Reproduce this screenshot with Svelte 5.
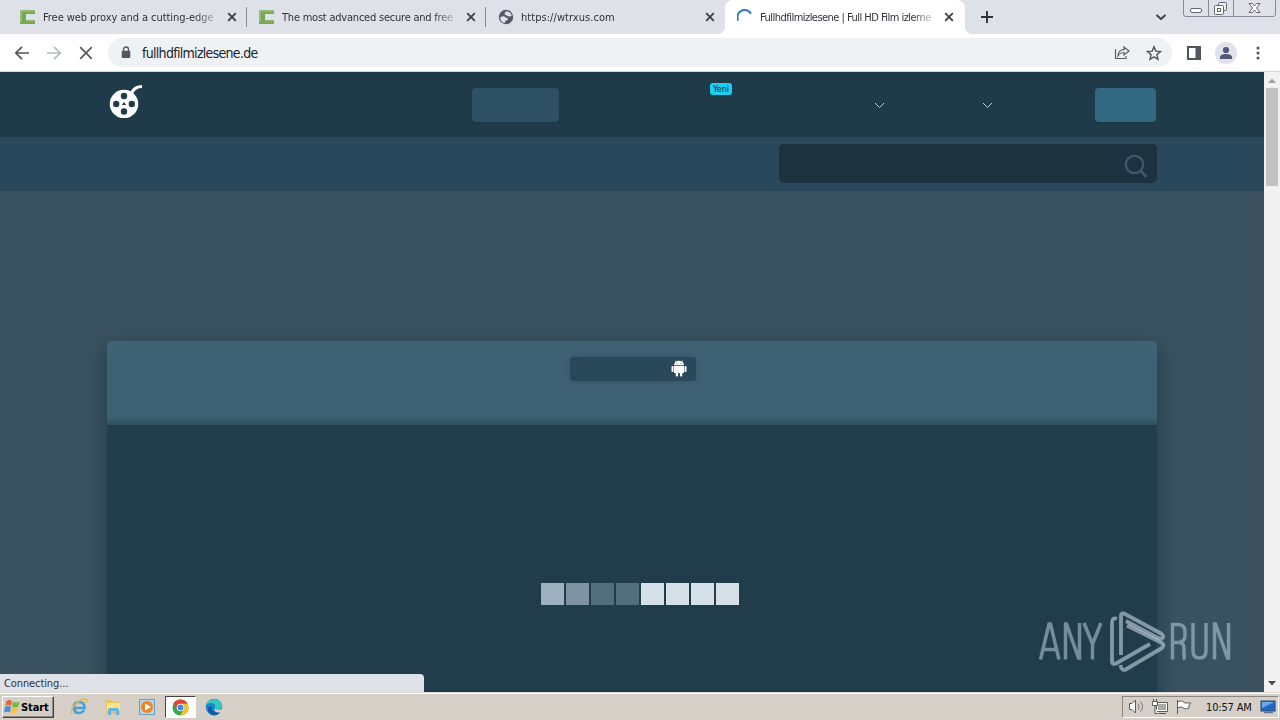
<script>
  const tabs = [
    { title: 'Free web proxy and a cutting-edge', icon: 'crox', gap: '-0.06px' },
    { title: 'The most advanced secure and free', icon: 'crox', gap: '-0.22px' },
    { title: 'https://wtrxus.com', icon: 'globe', gap: '0.05px' },
    { title: 'Fullhdfilmizlesene | Full HD Film izleme', icon: 'spin', active: true, gap: '-0.53px' }
  ];
  const blocks = ['#9db1bf', '#7f93a3', '#526f7e', '#526f7e', '#d5e0e8', '#d5e0e8', '#d5e0e8', '#d5e0e8'];
</script>

<div class="screen">
  <div class="tabstrip">
    {#each tabs as tab, i}
      <div class="tab" class:active={tab.active} class:divided={i < 2}>
        <svg class="favicon" viewBox="0 0 16 16" width="16" height="16">
          {#if tab.icon === 'crox'}
            <path d="M15 1H0v14h15v-4H6V5h9z" fill="#72aa4e" />
            <path d="M15 1H0l2 2h13zM6 11h9v1.500H5z" fill="#8fb879" />
            <path d="M0 1h2v12H0z" fill="#9ab98a" />
          {:else if tab.icon === 'globe'}
            <circle cx="8" cy="8" r="7.2" fill="#555a62" />
            <path d="M2.500 8c2-1 4-1 5 .5l2 .5c1 2-1 2-2 3l-1 2C3 13 2 10.500 2.500 8zM8 2.200c0 1.500-1.500 1-1.500 2.500S9 5.500 9 7l3 .5 1.800-1C13 4 10.500 2 8 2.200z" fill="#dee1e8" />
          {:else}
            <path d="M1.300 11.500A7 7 0 0 1 14 4.800" fill="none" stroke="#3974cb" stroke-width="2" />
          {/if}
        </svg>
        <span class="title" style:letter-spacing={tab.gap}>{tab.title}</span>
        <svg class="close" viewBox="0 0 10 10" width="10" height="10"><path d="M1.2 1.2l7.6 7.6M8.8 1.2L1.2 8.8" stroke="#3f4147" stroke-width="1.9" /></svg>
      </div>
    {/each}
    <svg class="plus" viewBox="0 0 14 14" width="14" height="14"><path d="M7 1v12M1 7h12" stroke="#303239" stroke-width="1.900" /></svg>
    <svg class="chev" viewBox="0 0 12 8" width="12" height="8"><path d="M1.500 2L6 6l4.500-4" fill="none" stroke="#3c4046" stroke-width="1.800" /></svg>
    <svg class="winbtns" viewBox="0 0 94 18" width="94" height="18">
      <path d="M.5 0v14q0 2.500 2.500 2.500h87q2.500 0 2.500-2.500V0M25.500 0v16M50.500 0v16" fill="none" stroke="#878b94" />
      <rect x="7.500" y="8.500" width="11" height="4" rx="1.500" fill="#fff" stroke="#63666e" />
      <rect x="35.500" y="2.500" width="8" height="8" rx="1" fill="#eee" stroke="#63666e" />
      <rect x="31.500" y="5.500" width="9" height="9" rx="1" fill="#fff" stroke="#63666e" />
      <rect x="34.500" y="8.500" width="3" height="3" fill="#fff" stroke="#63666e" />
      <path d="M66 3.500h3.500l2 2.500 2-2.500H77L73.500 8l3.500 4.500h-3.500l-2-2.500-2 2.500H66L69.500 8z" fill="#fff" stroke="#63666e" />
    </svg>
  </div>

  <div class="toolbar">
    <svg class="nav" viewBox="0 0 100 20" width="100" height="20" fill="none">
      <path d="M29 10H16M22 3.800L15.800 10l6.200 6.200" stroke="#505359" stroke-width="1.700" />
      <path d="M47 10h13M54 3.800l6.200 6.200-6.200 6.200" stroke="#b7babd" stroke-width="1.700" />
      <path d="M80.200 4.200l11.600 11.600M91.800 4.200L80.200 15.800" stroke="#55585d" stroke-width="1.700" />
    </svg>
    <div class="omnibox">
      <svg viewBox="0 0 10 13" width="10" height="13"><path d="M2.500 5.500V3.500a2.500 2.500 0 0 1 5 0v2" fill="none" stroke="#54575c" stroke-width="1.400" /><rect x=".7" y="4.800" width="8.600" height="7.200" rx="1" fill="#54575c" /></svg>
      <span class="url">fullhdfilmizlesene.de</span>
      <svg class="share" viewBox="0 0 16 16" width="16" height="16" fill="none" stroke="#5b5e64" stroke-width="1.200"><path d="M1.500 4v9.500H12V11M4 11c0-4 2-6.300 6-6.300V2l5 4-5 4V7.500C7.500 7.500 5.500 8.500 4 11z" /></svg>
      <svg viewBox="0 0 16 16" width="16" height="16"><path d="M8 1.700l1.800 4.400 4.700.4-3.600 3.100 1.100 4.700-4-2.500-4 2.500 1.100-4.700L1.500 6.500l4.700-.4z" fill="none" stroke="#505359" stroke-width="1.400" /></svg>
    </div>
    <svg class="panel" viewBox="0 0 14 14" width="14" height="14"><path d="M1 1h12v12H1z" fill="#fff" stroke="#515359" stroke-width="2" /><path d="M8.500 1H13v12H8.500z" fill="#55575e" /></svg>
    <svg class="avatar" viewBox="0 0 22 22" width="22" height="22"><circle cx="11" cy="11" r="11" fill="#dfe2ea" /><circle cx="11" cy="8" r="3.100" fill="#505a78" /><path d="M5 17v-2c0-4 12-4 12 0v2z" fill="#505a78" /></svg>
    <svg class="dots" viewBox="0 0 4 14" width="4" height="14" fill="#505359"><circle cx="2" cy="2" r="1.500" /><circle cx="2" cy="7" r="1.500" /><circle cx="2" cy="12" r="1.500" /></svg>
  </div>

  <div class="viewport">
    <div class="page">
      <header>
        <svg class="logo" viewBox="0 0 36 36" width="36" height="36">
          <path d="M23.500 11C26 6 29 4.500 34 4.500" fill="none" stroke="#fff" stroke-width="3.200" />
          <circle cx="16" cy="22" r="14.300" fill="#fff" />
          <g fill="#1f3b49"><circle cx="16" cy="14" r="3.200" /><circle cx="8.200" cy="22" r="3.200" /><circle cx="23.800" cy="22" r="3.200" /><circle cx="16" cy="29.500" r="3.200" /><path d="M13.800 23l2.200-3 2.200 3z" /></g>
        </svg>
        <div class="menu-button"></div>
        <span class="new">Yeni</span>
        <svg class="drop first" viewBox="0 0 11 7" width="11" height="7"><path d="M1 1l4.500 4.500L10 1" /></svg>
        <svg class="drop second" viewBox="0 0 11 7" width="11" height="7"><path d="M1 1l4.500 4.500L10 1" /></svg>
        <div class="login"></div>
      </header>
      <div class="subbar">
        <div class="search"><svg viewBox="0 0 24 24" width="24" height="24" fill="none" stroke="#415868"><circle cx="10.500" cy="10.500" r="8.700" stroke-width="2.200" /><path d="M16.500 16.500l6 6.500" stroke-width="2.600" /></svg></div>
      </div>
      <main>
        <div class="card-top">
          <div class="android">
            <svg viewBox="0 0 16 17" width="16" height="17" fill="#fff"><path d="M3 5.200a5 4.500 0 0 1 10 0z" /><path d="M4.200.5l1.500 2M11.800.5l-1.500 2" stroke="#fff" stroke-width=".7" /><path d="M3 6h10v7H3z" /><rect x=".5" y="6" width="2" height="6" rx="1" /><rect x="13.500" y="6" width="2" height="6" rx="1" /><rect x="4.700" y="11" width="2.400" height="5.500" rx="1" /><rect x="8.900" y="11" width="2.400" height="5.500" rx="1" /><path d="M5.500 3.200h.8v.8h-.8zM9.700 3.200h.8v.8h-.8z" fill="#29495b" /></svg>
          </div>
        </div>
        <div class="card-body">
          <div class="blocks">
            {#each blocks as color}<i style:background={color}></i>{/each}
          </div>
        </div>
      </main>
    </div>
    <div class="scrollbar">
      <svg viewBox="0 0 16 16" width="16" height="16"><path d="M4 11l4-4.500 4 4.500z" fill="#a0a0a0" /></svg>
      <div class="thumb"></div>
      <svg class="down" viewBox="0 0 16 16" width="16" height="16"><path d="M4 5l4 4.500L12 5z" fill="#4d4d4d" /></svg>
    </div>
    <div class="status">Connecting...</div>
    <svg class="watermark" viewBox="0 0 196 64" width="196" height="64">
      <g fill="none" stroke="#bdd0dc" stroke-opacity=".54" stroke-width="3.500">
        <path d="M3.500 49.500L12 14h1.500L22 49.500M6 39.500h13.500M28.500 49.500V14h1l12 34h1V13M47 13l8.500 21L64 13M55.500 32v17.500" />
        <path d="M135.500 49.500V14.500h5q7.500 0 7.500 7v4q0 7-7.500 7h-5M142 32.500q5 0 5 6v6q0 4 1 5M156 13v28q0 7 6.500 7t6.500-7V13M177.500 49.500V14h1l12 34h1V13" />
      </g>
      <g fill="none" stroke="#b6c9d5" stroke-opacity=".66" stroke-width="3.800" stroke-linejoin="round">
        <path d="M80 8.800q-5-2-5 4V51q0 4 4 2.500L113 34" />
        <path d="M84 45V6q0-4 4-2l36 19.500q4 3 1 5-1 1-5-1L89 11" />
        <path d="M83.500 55q1 7 6 4L125 38q3-3 0-5L90 15.500" />
      </g>
    </svg>
  </div>

  <div class="taskbar">
    <div class="start">
      <svg viewBox="0 0 16 16" width="16" height="16"><path d="M2.500 2Q5 0 8 2L7 7Q4 5 1.300 7z" fill="#e5683c" /><path d="M9 2.500q3 2 6.500 0l-1.200 5Q11 9.500 8 7.500z" fill="#77b84a" /><path d="M1 8q3-2 6 0l-1.200 5.500Q3 12 0 13.500z" fill="#4a90d6" /><path d="M7.800 8.500q3 2 6 0l-1.200 5q-3 2.500-6 .3z" fill="#f6c33b" /></svg>
      <b>Start</b>
    </div>
    <div class="launch">
      <svg viewBox="0 0 18 18" width="18" height="18"><path d="M14 12q-1.500 3-5 3-5 0-5-5.500Q4 4 9 4q5.500 0 5.500 6H5" fill="none" stroke="#45a4df" stroke-width="2.700" /><path d="M2 16C-1 12 8 1 15 1q3 0 1 4" fill="none" stroke="#e5b93a" stroke-width="1.400" /></svg>
      <svg viewBox="0 0 18 18" width="18" height="18"><path d="M2 2h6l1 2h7v12H2z" fill="#e5c65e" /><path d="M3 5h13v8H3z" fill="#f9e58d" /><path d="M4 17v-5q0-2 2-2h7q2 0 2 2v5h-3v-4H7v4z" fill="#67b3df" /></svg>
      <svg viewBox="0 0 18 18" width="18" height="18"><rect x="1.500" y="1.500" width="15" height="15" fill="#b7d4e8" stroke="#6c9fc2" /><circle cx="9" cy="9" r="6" fill="#ee8522" /><path d="M7 5.500v7l6-3.500z" fill="#fff" /></svg>
      <div class="running"><svg viewBox="0 0 18 18" width="17" height="17"><circle cx="9" cy="9" r="8.500" fill="#35a853" /><path d="M1.600 4.800A8.500 8.500 0 0 1 16.500 5H9a4 4 0 0 0-3.500 6z" fill="#e74335" /><path d="M16.500 5A8.500 8.500 0 0 1 8.700 17.500l3.800-6.500A4 4 0 0 0 9 5z" fill="#fac224" /><circle cx="9" cy="9" r="4" fill="#fff" /><circle cx="9" cy="9" r="3.100" fill="#4285f4" /></svg></div>
      <svg viewBox="0 0 18 18" width="18" height="18"><circle cx="9" cy="9" r="8.300" fill="#1789ce" /><path d="M1 7Q3 1 9 1q8 0 8 7 0 4-5 4-3 0-2-2Q11 5 6 5 3 5 1 7z" fill="#37c6bc" /><path d="M7 8q-1 7 8 6.500-2 3-6 3-7-1-6-8z" fill="#155ba8" /><path d="M9.800 10q-.5 2.500 6 1.500l2-.5v3l-2.500.5Q8 15 9.800 10z" fill="#d6d1cb" /></svg>
    </div>
    <div class="tray">
      <svg viewBox="0 0 70 18" width="70" height="18" fill="#fff" stroke="#5b5b5b">
        <path d="M2.500 5.500H5L8.500 2v13L5 11.500H2.500z" /><path d="M11 5.500q2.500 3 0 6M13.500 3.500q4 5 0 10" fill="none" stroke="#777" />
        <path d="M29.500 4.500h11v9h-11zM32 15.500h7" /><path d="M31 6h8v6h-8z" fill="#aaa" stroke="none" /><path d="M25.500 3.500h5v4h-5zM26.500 1v2M29.500 1v2M28 8v7.500h3" />
        <path d="M50.500 2v14M51 3.500q4-2 7 1.500h6q-3 2-2 5-5 2-7-1l-4 .5" />
      </svg>
      <span>10:57 AM</span>
      <svg viewBox="0 0 16 16" width="16" height="16"><rect x="1" y="2" width="14" height="10" fill="#2569c6" stroke="#26466f" /><path d="M2 3h12L2 9z" fill="#6caaf0" /><path d="M4 13.500h9" stroke="#62768b" stroke-width="1.500" /></svg>
    </div>
  </div>
</div>

<style>
  * { box-sizing: border-box; }
  svg { display: block; flex: none; }
  .screen { width: 1280px; height: 720px; overflow: hidden; display: flex; flex-direction: column; font-family: "DejaVu Sans Condensed", "DejaVu Sans", sans-serif; font-stretch: condensed; font-size: 11px; color: #303238; }
  .tabstrip { height: 34px; background: #dee1e8; display: flex; align-items: center; padding-left: 8px; flex: none; }
  .tab { width: 239px; height: 34px; flex: none; display: flex; align-items: center; padding: 0 0 0 12px; position: relative; }
  .tab.divided { border-right: 1px solid #888c95; height: 20px; }
  .tab.active { width: 240px; background: #fff; border-radius: 8px 8px 0 0; }
  .tab.active::before, .tab.active::after { content: ''; position: absolute; bottom: 0; width: 8px; height: 8px; }
  .tab.active::before { right: 100%; background: radial-gradient(circle at 0 0, transparent 8px, #fff 8.5px); }
  .tab.active::after { left: 100%; background: radial-gradient(circle at 100% 0, transparent 8px, #fff 8.5px); }
  .title { margin-left: 7px; width: 178px; flex: none; white-space: nowrap; overflow: hidden; line-height: 16px; padding-top: 1px; mask-image: linear-gradient(90deg, #000 152px, transparent 178px); }
  .close { margin-left: 6px; }
  .plus { margin-left: 15px; }
  .chev { margin-left: 161px; }
  .winbtns { margin-left: 16px; align-self: flex-start; }
  .toolbar { height: 38px; flex: none; background: #fff; border-bottom: 1px solid #ccd6de; display: flex; align-items: center; }
  .omnibox { margin-left: 8px; width: 1064px; height: 29px; border-radius: 15px; background: #eff2f5; display: flex; align-items: center; padding: 0 10px 0 13px; }
  .url { margin-left: 11px; font-size: 14px; letter-spacing: -0.7px; color: #222429; flex: 1; white-space: nowrap; }
  .share { margin-right: 16px; }
  .panel { margin-left: 15px; }
  .avatar { margin-left: 14px; }
  .dots { margin-left: 19px; }
  .viewport { height: 620px; flex: none; display: flex; position: relative; overflow: hidden; }
  .page { width: 1264px; height: 620px; background: #3a525f; display: flex; flex-direction: column; overflow: hidden; }
  header { height: 65px; flex: none; background: #1f3b49; display: flex; align-items: flex-start; padding: 10px 0 0 108px; }
  .menu-button { width: 87px; height: 34px; margin: 6px 0 0 328px; border-radius: 4px; background: #2d5062; box-shadow: 0 1px 1px #1a3746; }
  .new { margin: 1px 0 0 151px; width: 22px; height: 12px; border-radius: 3px; background: #1bcff5; color: #10202f; font-size: 9px; line-height: 12px; text-align: center; letter-spacing: 0; }
  .drop { fill: none; stroke: #bad0d9; stroke-width: 1; margin-top: 20px; }
  .first { margin-left: 142px; }
  .second { margin-left: 97px; }
  .login { width: 61px; height: 34px; margin: 6px 0 0 102px; border-radius: 4px; background: #336883; box-shadow: 0 1px 1px #193543; }
  .subbar { height: 54px; flex: none; background: #2a485b; padding: 7px 107px 0 0; }
  .search { width: 378px; height: 39px; margin-left: auto; background: #1d323f; border-radius: 5px; display: flex; align-items: center; justify-content: flex-end; padding: 4px 9px 0 0; }
  main { margin: 150px 107px 0; height: 420px; flex: none; border-radius: 3px 3px 0 0; box-shadow: 0 8px 20px 1px #213c4b; }
  .card-top { height: 84px; padding-top: 16px; background: linear-gradient(#3f6174 68px, #3b5e70 77px, #2f5061); border-radius: 3px 3px 0 0; }
  .android { width: 126px; height: 24px; margin-left: 463px; background: #29495b; border-radius: 3px; box-shadow: 0 0 6px #34566a; display: flex; justify-content: flex-end; align-items: center; padding: 0 9px 1px 0; }
  .card-body { height: 336px; background: #213c4a; padding: 158px 0 0 434px; }
  .blocks { display: flex; gap: 2px; }
  .blocks i { width: 23px; height: 22px; }
  .scrollbar { width: 16px; height: 620px; background: #f1f1f2; display: flex; flex-direction: column; }
  .thumb { width: 12px; height: 98px; margin-left: 2px; background: #c1c1c2; }
  .down { margin-top: auto; }
  .status { position: absolute; left: 0; bottom: 0; width: 424px; height: 18px; background: #dee1e8; border-radius: 0 4px 0 0; padding: 1px 0 0 4px; line-height: 18px; letter-spacing: -0.1px; }
  .watermark { position: absolute; left: 1037px; top: 538px; }
  .taskbar { height: 28px; flex: none; background: #d5cfc8; border-top: 1px solid #dcd8d2; box-shadow: inset 0 1px #fff; display: flex; align-items: center; padding: 2px 1px 1px 2px; }
  .start { width: 52px; height: 22px; display: flex; align-items: center; border: 1px solid; border-color: #fff #444 #444 #fff; box-shadow: inset -1px -1px #8b8782; padding-left: 1px; gap: 1px; color: #000; }
  .start b { font-size: 11px; letter-spacing: -0.1px; }
  .launch { display: flex; align-items: center; margin-left: 16px; }
  .launch > svg { margin-right: 16px; }
  .running { width: 31px; height: 22px; margin: 0 9px 0 -7px; border: 1px solid; border-color: #444 #fff #fff #444; background: #fff; display: flex; align-items: center; justify-content: center; }
  .tray { margin-left: auto; width: 157px; height: 22px; border: 1px solid; border-color: #8a8681 #fff #fff #8a8681; display: flex; align-items: center; padding: 0 2px 0 4px; color: #111; }
  .tray span { margin-left: 9px; width: 48px; white-space: nowrap; letter-spacing: -0.15px; }
  .tray svg:last-child { margin-left: auto; }
</style>
